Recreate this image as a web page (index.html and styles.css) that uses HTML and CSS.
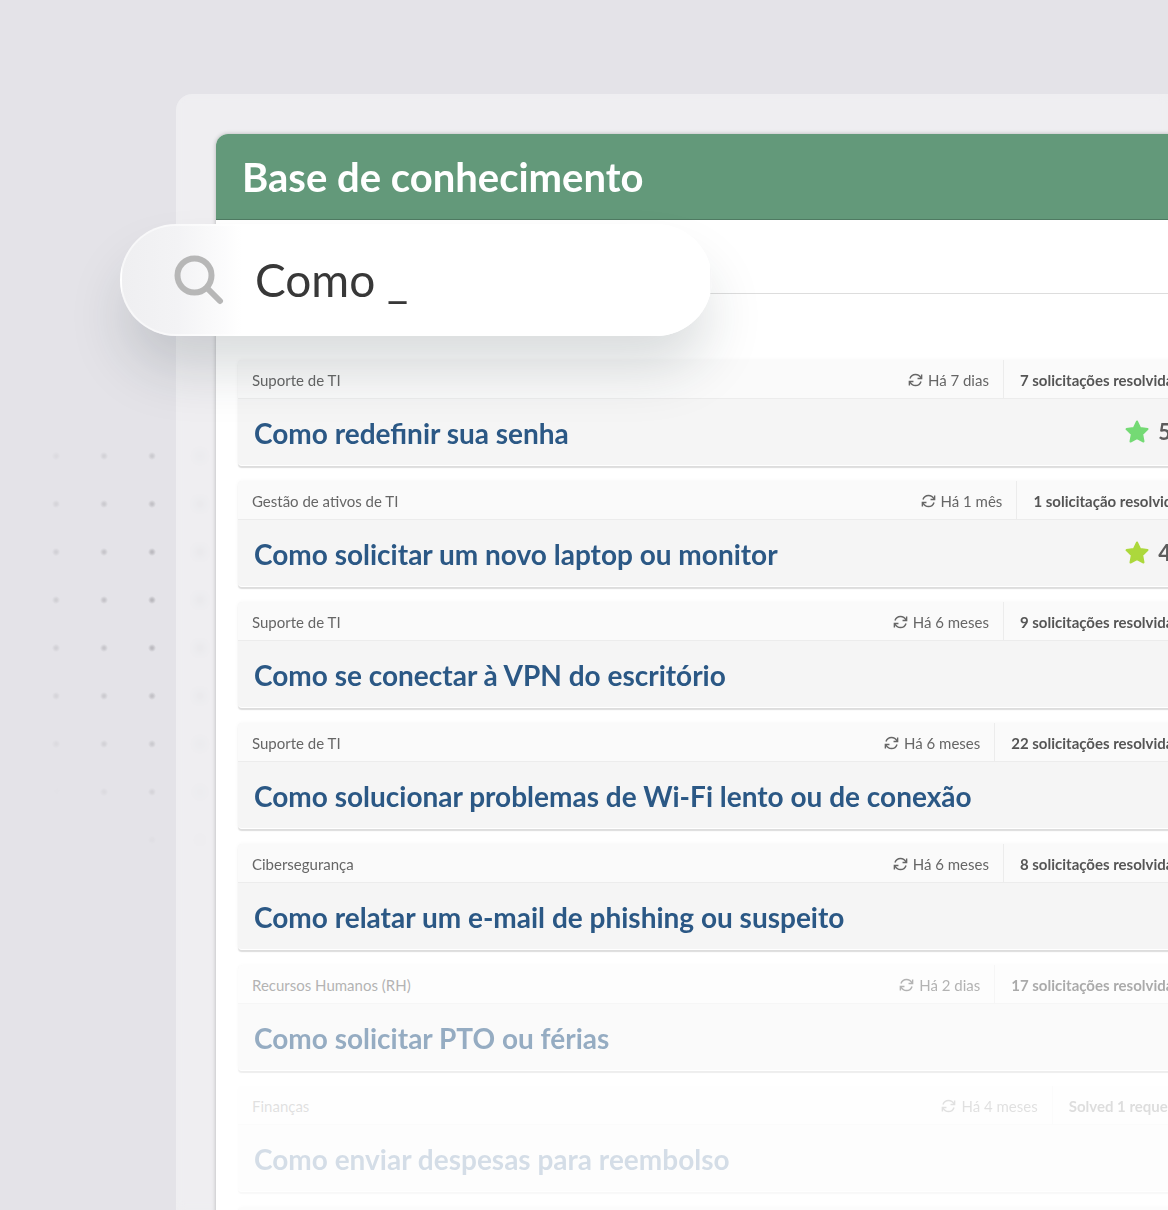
FILE: index.html
```html
<!DOCTYPE html>
<html lang="pt-BR">
<head>
  <meta charset="UTF-8" />
  <meta name="viewport" content="width=device-width, initial-scale=1" />
  <title>Base de conhecimento</title>
  <link rel="stylesheet" href="styles.css">
</head>
<body>
  <svg class="sprite" aria-hidden="true">
    <symbol id="refresh" viewBox="0 0 24 24">
      <path d="M2.5 9.500C4 5 7.800 2.500 12 2.500c4 0 7.500 2.200 9.500 6M21.500 14.500c-1.500 4.500-5.300 7-9.500 7-4 0-7.500-2.200-9.500-6" />
      <path d="M22.500 2.500v7h-7M1.500 21.500v-7h7" />
    </symbol>
    <symbol id="star" viewBox="0 0 24 24">
      <path d="M12 1.500l3.200 6.600 7.300 1-5.300 5.100 1.300 7.300L12 18l-6.500 3.500 1.300-7.300L1.500 9.100l7.300-1z" />
    </symbol>
  </svg>

  <div class="page">
    <div class="dots"></div>

    <div class="frame">
      <main class="panel">
        <header class="panel-header">
          <h1>Base de conhecimento</h1>
        </header>
        <div class="toolbar"></div>

        <div class="list">
          <article class="card">
            <div class="card-top">
              <span class="category">Suporte de TI</span>
              <span class="updated"><svg class="icon-refresh"><use href="#refresh" /></svg>Há 7 dias</span>
              <span class="solved">7 solicitações resolvidas</span>
            </div>
            <div class="card-body">
              <h2><a href="#">Como redefinir sua senha</a></h2>
              <span class="rating rating-high"><svg class="icon-star"><use href="#star" /></svg>5</span>
            </div>
          </article>

          <article class="card">
            <div class="card-top">
              <span class="category">Gestão de ativos de TI</span>
              <span class="updated"><svg class="icon-refresh"><use href="#refresh" /></svg>Há 1 mês</span>
              <span class="solved">1 solicitação resolvida</span>
            </div>
            <div class="card-body">
              <h2><a href="#">Como solicitar um novo laptop ou monitor</a></h2>
              <span class="rating rating-good"><svg class="icon-star"><use href="#star" /></svg>4</span>
            </div>
          </article>

          <article class="card">
            <div class="card-top">
              <span class="category">Suporte de TI</span>
              <span class="updated"><svg class="icon-refresh"><use href="#refresh" /></svg>Há 6 meses</span>
              <span class="solved">9 solicitações resolvidas</span>
            </div>
            <div class="card-body">
              <h2><a href="#">Como se conectar à VPN do escritório</a></h2>
            </div>
          </article>

          <article class="card">
            <div class="card-top">
              <span class="category">Suporte de TI</span>
              <span class="updated"><svg class="icon-refresh"><use href="#refresh" /></svg>Há 6 meses</span>
              <span class="solved">22 solicitações resolvidas</span>
            </div>
            <div class="card-body">
              <h2><a href="#">Como solucionar problemas de Wi-Fi lento ou de conexão</a></h2>
            </div>
          </article>

          <article class="card">
            <div class="card-top">
              <span class="category">Cibersegurança</span>
              <span class="updated"><svg class="icon-refresh"><use href="#refresh" /></svg>Há 6 meses</span>
              <span class="solved">8 solicitações resolvidas</span>
            </div>
            <div class="card-body">
              <h2><a href="#">Como relatar um e-mail de phishing ou suspeito</a></h2>
            </div>
          </article>

          <article class="card card-fading">
            <div class="card-top">
              <span class="category">Recursos Humanos (RH)</span>
              <span class="updated"><svg class="icon-refresh"><use href="#refresh" /></svg>Há 2 dias</span>
              <span class="solved">17 solicitações resolvidas</span>
            </div>
            <div class="card-body">
              <h2><a href="#">Como solicitar PTO ou férias</a></h2>
            </div>
          </article>

          <article class="card card-faded">
            <div class="card-top">
              <span class="category">Finanças</span>
              <span class="updated"><svg class="icon-refresh"><use href="#refresh" /></svg>Há 4 meses</span>
              <span class="solved">Solved 1 request</span>
            </div>
            <div class="card-body">
              <h2><a href="#">Como enviar despesas para reembolso</a></h2>
            </div>
          </article>

          <div class="card card-fading" aria-hidden="true">
            <div class="card-top"></div>
            <div class="card-body"></div>
          </div>
        </div>
      </main>
    </div>

    <label class="search">
      <svg class="icon-search" viewBox="0 0 50 50" aria-hidden="true">
        <circle cx="20.500" cy="20.500" r="17" />
        <path d="M33 33l13 13" />
      </svg>
      <input type="text" value="Como _" aria-label="Pesquisar" />
    </label>
  </div>
</body>
</html>
```
FILE: styles.css
```css
* {
  box-sizing: border-box;
}
body {
  margin: 0;
  font-family: Lato, sans-serif;
  background: #e4e3e8;
  color: #555;
}
.sprite {
  display: none;
}
.page {
  position: relative;
  height: 100vh;
  overflow: hidden;
  padding-top: 94px;
  padding-left: 176px;
}

/* dotted pattern behind the frame */
.dots {
  position: absolute;
  top: 432px;
  left: 32px;
  width: 192px;
  height: 432px;
  background: radial-gradient(circle, #b9b8bd 1px, transparent 4px) 0 0 / 48px 48px;
  -webkit-mask-image: radial-gradient(circle 275px at 218px 168px, #000 35%, transparent);
  mask-image: radial-gradient(circle 275px at 218px 168px, #000 35%, transparent);
}

.frame {
  position: relative;
  margin-right: -86px;
  padding: 40px;
  border-radius: 16px;
  background: rgba(255, 255, 255, 0.4);
  backdrop-filter: blur(4px);
}
.panel {
  background: #fff;
  border-radius: 12px;
  box-shadow: 0 0 4px rgba(0, 0, 0, 0.25);
}
.panel-header {
  height: 86px;
  padding: 0 26px;
  display: flex;
  align-items: center;
  background: #63997a;
  border-bottom: 1px solid #4f7a62;
  border-radius: 12px 12px 0 0;
}
h1 {
  margin: 0;
  font-size: 40px;
  line-height: 48px;
  font-weight: 700;
  color: #fff;
}
.toolbar {
  height: 74px;
  border-bottom: 1px solid #ddd;
}

.list {
  display: flex;
  flex-direction: column;
  gap: 15px;
  padding: 66px 22px 22px;
}
.card {
  border-radius: 4px;
  background: #f5f5f5;
  border-bottom: 1px solid #fff;
  box-shadow: 0 2px 1px #ddd, 0 0 4px rgba(0, 0, 0, 0.04);
}
.card-top {
  display: flex;
  height: 39px;
  line-height: 36px;
  padding: 0 12px 0 14px;
  background: #fafafa;
  border-bottom: 1px solid #ececec;
  border-radius: 4px 4px 0 0;
  font-size: 15px;
  color: #666;
}
.card-top span {
  padding-top: 2px;
}
.category {
  flex: 1;
}
.updated {
  display: flex;
  align-items: center;
  gap: 5px;
  padding-right: 14px;
}
.solved {
  padding-left: 16px;
  border-left: 1px solid #ececec;
  font-weight: 700;
  color: #555;
}
.card-body {
  display: flex;
  align-items: center;
  justify-content: space-between;
  height: 66px;
  padding: 2px 21px 0 16px;
}
h2 {
  margin: 0;
  font-size: 28px;
  line-height: 36px;
  font-weight: 700;
}
h2 a {
  color: #2b5885;
  text-decoration: none;
}
.rating {
  display: flex;
  align-items: center;
  gap: 9px;
  line-height: 24px;
  padding-bottom: 2px;
  font-size: 22px;
  font-weight: 700;
  color: #5c5c5c;
}
.rating-high .icon-star {
  color: #74da74;
}
.rating-good .icon-star {
  color: #acd83c;
}
.card-fading {
  opacity: 0.5;
}
.card-faded {
  opacity: 0.2;
}

.icon-refresh {
  width: 15px;
  height: 14px;
  fill: none;
  stroke: currentColor;
  stroke-width: 2.4;
}
.icon-star {
  width: 24px;
  height: 24px;
  fill: currentColor;
  stroke: currentColor;
  stroke-width: 2;
  stroke-linejoin: round;
}

/* floating search box */
.search {
  position: absolute;
  top: 224px;
  left: 120px;
  width: 592px;
  height: 112px;
  display: flex;
  align-items: center;
  gap: 31px;
  padding: 0 52px;
  border: 2px solid rgba(255, 255, 255, 0.5);
  border-radius: 56px;
  background: linear-gradient(to right, #efeff1, #f3f3f5 55px, #fff 120px);
  box-shadow: 0 36px 56px -4px rgba(30, 45, 55, 0.17);
}
.icon-search {
  flex: none;
  width: 50px;
  height: 50px;
  fill: none;
  stroke: #b7b7b7;
  stroke-width: 6;
  stroke-linecap: round;
}
.search input {
  flex: 1;
  min-width: 0;
  padding: 0 0 2px;
  border: 0;
  outline: none;
  background: transparent;
  font-family: inherit;
  font-size: 46px;
  color: #383838;
}
```
